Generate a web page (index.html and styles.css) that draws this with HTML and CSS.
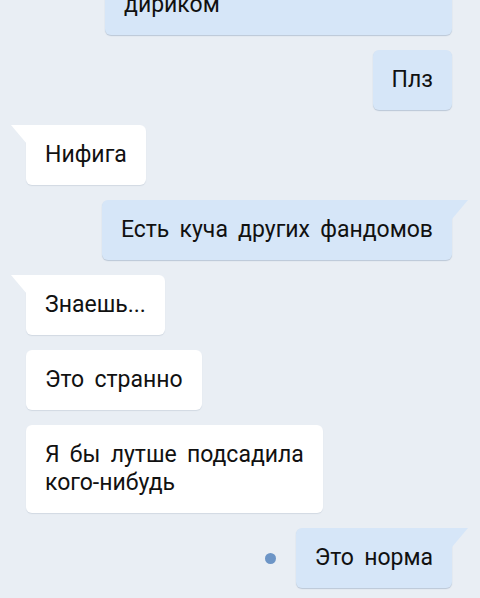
FILE: index.html
```html
<!DOCTYPE html>
<html lang="ru">
<head>
<meta charset="utf-8">
<link rel="stylesheet" href="styles.css">
</head>
<body>
<div class="chat">
  <div class="row out"><div class="bubble out wide">дириком</div></div>
  <div class="row out"><div class="bubble out">Плз</div></div>
  <div class="row in"><div class="bubble in tail">Нифига</div></div>
  <div class="row out"><div class="bubble out tail">Есть куча других фандомов</div></div>
  <div class="row in"><div class="bubble in tail">Знаешь...</div></div>
  <div class="row in"><div class="bubble in">Это странно</div></div>
  <div class="row in"><div class="bubble in multi">Я бы лутше подсадила<br>кого-нибудь</div></div>
  <div class="row out"><span class="unread"></span><div class="bubble out tail">Это норма</div></div>
</div>
</body>
</html>
```
FILE: styles.css
```css
html, body {
  margin: 0;
  padding: 0;
  background: #e9eef4;
  height: 100%;
  overflow: hidden;
}
.chat {
  display: flex;
  flex-direction: column;
  gap: 15px;
  margin-top: -25px;
  font-family: Roboto, "Noto Sans", sans-serif;
  font-size: 23px;
  word-spacing: 4.5px;
  color: #111;
}
.row {
  display: flex;
  align-items: center;
}
.row.out {
  justify-content: flex-end;
  padding-right: 28px;
}
.row.in {
  justify-content: flex-start;
  padding-left: 26px;
}
.bubble {
  position: relative;
  padding: 16px 19px;
  line-height: 28px;
  border-radius: 6px;
}
.bubble.out {
  background: #d6e6f8;
  box-shadow: 0 1px 1px rgba(70, 100, 140, 0.28);
}
.bubble.in {
  background: #ffffff;
  box-shadow: 0 1px 1px rgba(70, 90, 120, 0.14);
}
.bubble.wide {
  width: 309px;
}
.bubble.out.tail {
  border-top-right-radius: 0;
}
.bubble.in.tail {
  border-top-left-radius: 0;
}
.bubble.tail::before {
  content: "";
  position: absolute;
  top: 0;
  width: 16px;
  height: 19px;
}
.bubble.out.tail::before {
  right: -16px;
  background: #d6e6f8;
  clip-path: polygon(0 0, 100% 0, 0 100%);
}
.bubble.in.tail::before {
  left: -15px;
  background: #ffffff;
  clip-path: polygon(0 0, 100% 0, 100% 100%);
}
.unread {
  width: 11px;
  height: 11px;
  border-radius: 50%;
  background: #6d95c6;
  margin-right: 20px;
}
```
